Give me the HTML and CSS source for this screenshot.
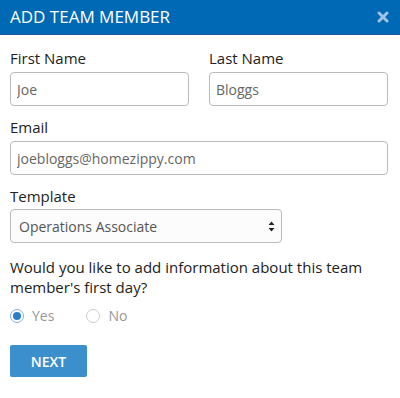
FILE: index.html
```html
<!DOCTYPE html>
<html lang="en">
<head>
    <meta charset="UTF-8">
    <meta name="viewport" content="width=device-width, initial-scale=1.0">
    <title>Add Team Member</title>
    <link rel="stylesheet" href="styles.css">
</head>
<body>
    <div class="modal">
        <div class="modal-header">
            <h3>ADD TEAM MEMBER</h3>
            <svg class="close" width="12" height="12" viewBox="0 0 12 12">
                <path d="M2 2 L10 10 M10 2 L2 10" stroke="#9fc4e6" stroke-width="3" stroke-linecap="round"/>
            </svg>
        </div>
        <div class="modal-body">
            <div class="row">
                <div class="form-group">
                    <label for="firstName">First Name</label>
                    <input type="text" id="firstName" value="Joe">
                </div>
                <div class="form-group">
                    <label for="lastName">Last Name</label>
                    <input type="text" id="lastName" value="Bloggs">
                </div>
            </div>
            <div class="form-group">
                <label for="email">Email</label>
                <input type="text" id="email" value="joebloggs@homezippy.com">
            </div>
            <div class="form-group">
                <label for="template">Template</label>
                <div class="select-wrap">
                    <select id="template">
                        <option selected>Operations Associate</option>
                        <option>Sales Associate</option>
                    </select>
                    <svg class="arrows" width="7" height="11" viewBox="0 0 7 11">
                        <path d="M3.5 0.5 L6.5 4 L0.5 4 Z M3.5 10.5 L6.5 7 L0.5 7 Z" fill="#222"/>
                    </svg>
                </div>
            </div>
            <p class="question">Would you like to add information about this team member's first day?</p>
            <div class="radios">
                <label class="radio"><input type="radio" name="firstDay" checked> Yes</label>
                <label class="radio"><input type="radio" name="firstDay"> No</label>
            </div>
            <button>NEXT</button>
        </div>
    </div>
</body>
</html>
```

FILE: styles.css
```css
body {
    font-family: 'Open Sans', 'Liberation Sans', sans-serif;
    background-color: #fff;
    margin: 0;
    color: #222;
}
.modal {
    width: 400px;
}
.modal-header {
    height: 34px;
    background-color: #0069b5;
    border-bottom: 1px solid #1b56a0;
    display: flex;
    align-items: center;
    justify-content: space-between;
    padding: 0 10px;
}
.modal-header h3 {
    margin: 0;
    font-size: 17px;
    font-weight: 400;
    color: #fff;
    line-height: 34px;
}
.close {
    margin-right: 1px;
}
.modal-body {
    padding: 13px 12px 20px 10px;
}
.row {
    display: flex;
    gap: 20px;
}
.row .form-group {
    flex: 1;
}
.form-group {
    margin-bottom: 11px;
}
label {
    display: block;
    font-size: 15px;
    line-height: 20px;
    margin-bottom: 4px;
}
input[type="text"], select {
    width: 100%;
    box-sizing: border-box;
    height: 34px;
    padding: 0 6px;
    border: 1px solid #bbb;
    border-radius: 4px;
    font-family: inherit;
    font-size: 14px;
    color: #666;
    background-color: #fff;
}
.select-wrap {
    position: relative;
    width: 272px;
    margin-top: -1px;
}
select {
    -webkit-appearance: none;
    appearance: none;
    padding-left: 8px;
    color: #555;
    background-color: #fcfcfc;
}
.arrows {
    position: absolute;
    right: 7px;
    top: 12px;
}
.question {
    margin: 14px 0 9px;
    font-size: 15px;
    line-height: 20px;
}
.radios {
    display: flex;
    gap: 32px;
    margin-bottom: 19px;
}
.radio {
    display: flex;
    align-items: center;
    gap: 8px;
    color: #999;
    font-size: 14px;
    margin: 0;
}
.radio input {
    -webkit-appearance: none;
    appearance: none;
    width: 14px;
    height: 14px;
    margin: 0;
    border: 1px solid #ccc;
    border-radius: 50%;
    background-color: #fff;
    display: grid;
    place-items: center;
}
.radio input:checked {
    border-color: #7fb0dc;
}
.radio input:checked::before {
    content: "";
    width: 8px;
    height: 8px;
    border-radius: 50%;
    background-color: #2b7fc4;
}
button {
    width: 77px;
    height: 32px;
    background-color: #3a8fcc;
    color: #fff;
    border: none;
    border-radius: 2px;
    font-family: inherit;
    font-size: 14px;
    font-weight: 600;
    cursor: pointer;
}
button:hover {
    background-color: #2b7fc4;
}
```
